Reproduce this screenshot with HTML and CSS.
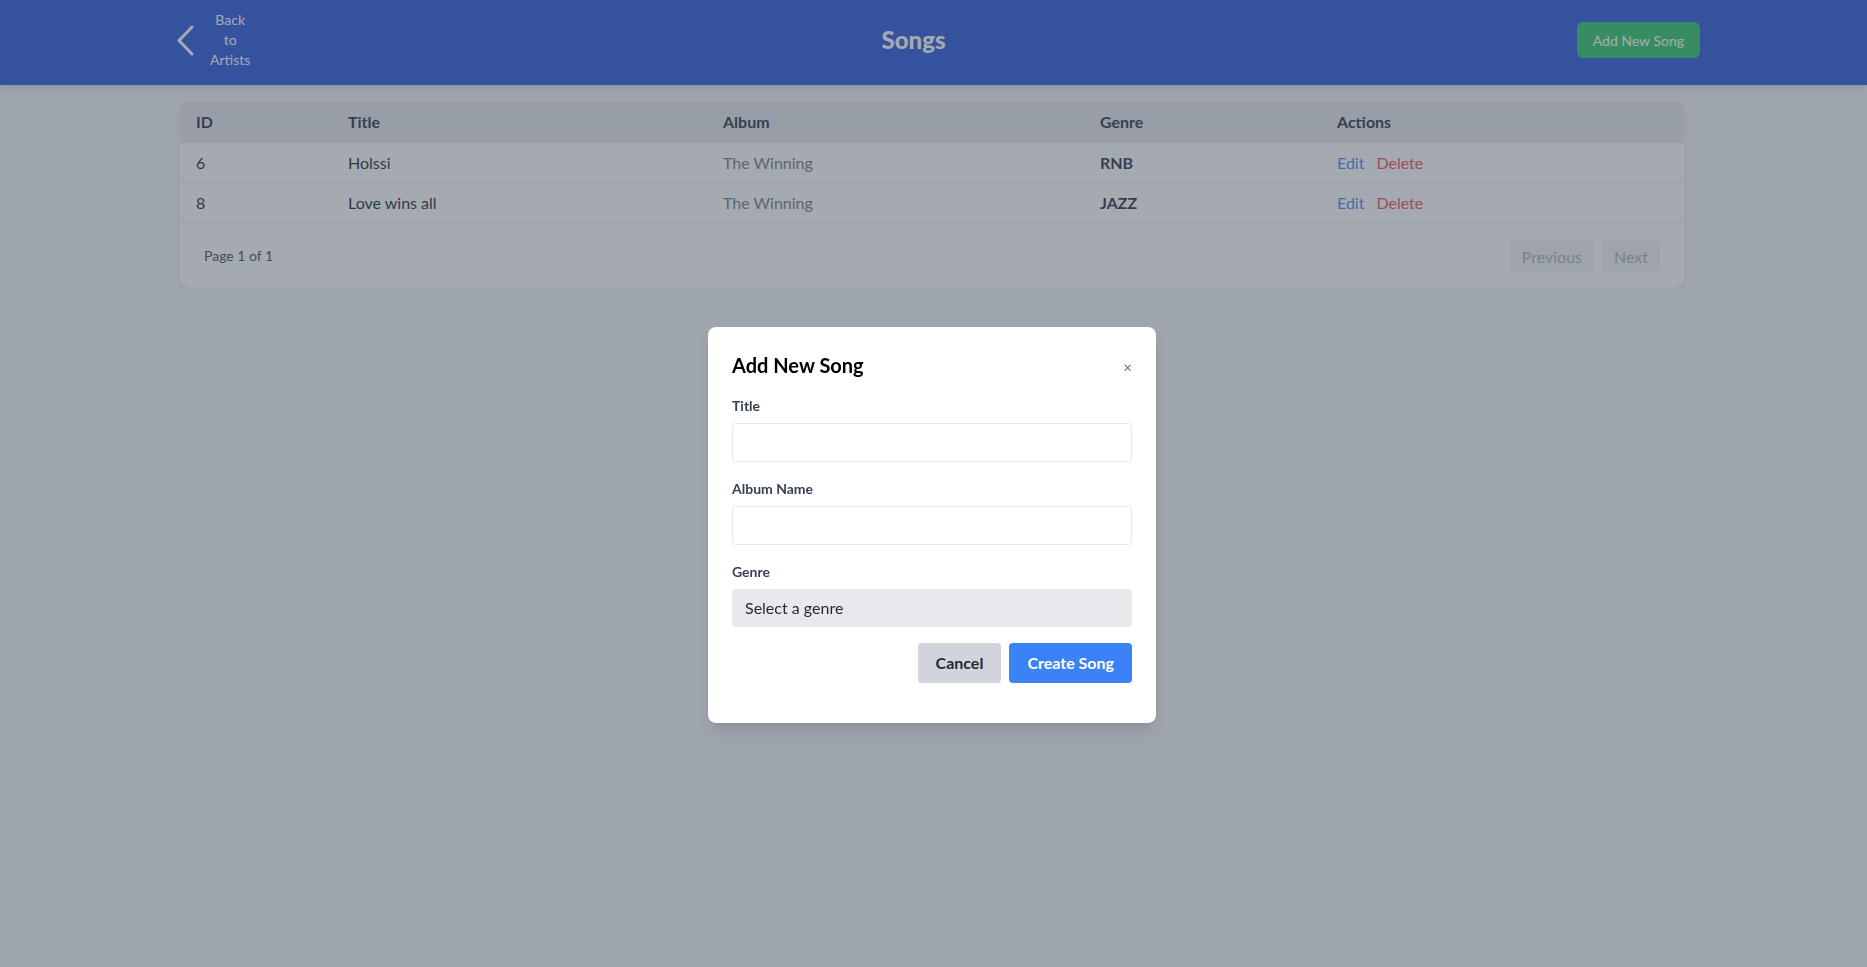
FILE: index.html
```html
<!DOCTYPE html>
<html lang="en">
<head>
<meta charset="utf-8">
<title>Songs</title>
<link rel="stylesheet" href="styles.css">
</head>
<body>
<header class="topbar">
  <a class="back" href="#">
    <svg class="back-icon" viewBox="0 0 20 34" width="20" height="34" aria-hidden="true"><path d="M17 4 L4 17.5 L17 31" fill="none" stroke="#ffffff" stroke-width="3" stroke-linecap="round" stroke-linejoin="round"/></svg>
    <span class="back-text">Back to Artists</span>
  </a>
  <h1 class="page-title">Songs</h1>
  <button class="btn-add" type="button">Add New Song</button>
</header>

<main class="content">
  <section class="card">
    <table class="songs">
      <colgroup>
        <col class="c-id"><col class="c-title"><col class="c-album"><col class="c-genre"><col class="c-actions">
      </colgroup>
      <thead>
        <tr><th>ID</th><th>Title</th><th>Album</th><th>Genre</th><th>Actions</th></tr>
      </thead>
      <tbody>
        <tr><td>6</td><td>Holssi</td><td class="album">The Winning</td><td class="genre">RNB</td><td><a class="edit" href="#">Edit</a><a class="delete" href="#">Delete</a></td></tr>
        <tr><td>8</td><td>Love wins all</td><td class="album">The Winning</td><td class="genre">JAZZ</td><td><a class="edit" href="#">Edit</a><a class="delete" href="#">Delete</a></td></tr>
      </tbody>
    </table>
    <div class="pager">
      <span class="page-info">Page 1 of 1</span>
      <div class="pager-btns">
        <button class="pg-btn" type="button" disabled>Previous</button>
        <button class="pg-btn" type="button" disabled>Next</button>
      </div>
    </div>
  </section>
</main>

<div class="overlay">
  <div class="modal">
    <div class="modal-head">
      <h2 class="modal-title">Add New Song</h2>
      <button class="close" type="button">×</button>
    </div>
    <form class="form">
      <div class="field">
        <label class="label" for="t">Title</label>
        <input class="input" id="t" type="text">
      </div>
      <div class="field">
        <label class="label" for="a">Album Name</label>
        <input class="input" id="a" type="text">
      </div>
      <div class="field field-last">
        <label class="label" for="g">Genre</label>
        <select class="select" id="g"><option>Select a genre</option></select>
      </div>
      <div class="actions">
        <button class="btn-cancel" type="button">Cancel</button>
        <button class="btn-create" type="button">Create Song</button>
      </div>
    </form>
  </div>
</div>
</body>
</html>
```

FILE: styles.css
```css
* { box-sizing: border-box; }

body {
  margin: 0;
  background: #f3f4f6;
  font-family: "Lato", "Noto Sans", sans-serif;
  color: #111827;
}

/* Top bar */
.topbar {
  height: 85px;
  padding: 10px 167px 15px 175px;
  display: flex;
  align-items: center;
  justify-content: space-between;
  background: #1d4ed8;
  box-shadow: 0 4px 6px -1px rgba(0,0,0,0.1), 0 2px 4px -2px rgba(0,0,0,0.1);
}
.back {
  display: flex;
  align-items: center;
  color: #ffffff;
  text-decoration: none;
}
.back-icon { display: block; }
.back-text {
  width: min-content;
  margin-left: 15px;
  font-size: 14px;
  line-height: 20px;
  text-align: center;
}
.page-title {
  margin: 0;
  font-size: 24px;
  line-height: 32px;
  font-weight: 900;
  color: #ffffff;
}
.btn-add {
  height: 36px;
  padding: 0 16px;
  border: 0;
  border-radius: 6px;
  background: #22c55e;
  color: #ffffff;
  font-family: inherit;
  font-size: 14px;
}

/* Content */
.content {
  padding: 17px 183px 0 180px;
}
.card {
  background: #ffffff;
  border-radius: 8px;
  overflow: hidden;
  box-shadow: 0 4px 6px -1px rgba(0,0,0,0.1), 0 2px 4px -2px rgba(0,0,0,0.1);
}
.songs {
  width: 100%;
  border-collapse: collapse;
  table-layout: fixed;
}
.c-id { width: 152px; }
.c-title { width: 375px; }
.c-album { width: 377px; }
.c-genre { width: 237px; }
.c-actions { width: 363px; }
.songs th {
  text-align: left;
  padding: 8px 16px;
  font-size: 16px;
  line-height: 24px;
  font-weight: 700;
  color: #1f2937;
  background: #e5e7eb;
}
.songs td {
  padding: 8px 16px 7px;
  font-size: 16px;
  line-height: 24px;
  color: #111827;
  border-top: 1px solid #e5e7eb;
}
.songs td.album { color: #6b7280; }
.songs td.genre { font-weight: 700; color: #1f2937; }
.edit { color: #3b82f6; text-decoration: none; margin-right: 12px; }
.delete { color: #ef4444; text-decoration: none; }

.pager {
  display: flex;
  align-items: center;
  justify-content: space-between;
  padding: 17px 24px 15px;
  border-top: 1px solid #e5e7eb;
}
.page-info {
  font-size: 14px;
  line-height: 20px;
  color: #374151;
}
.pager-btns { display: flex; gap: 8px; }
.pg-btn {
  height: 32px;
  padding: 0 12px;
  border: 0;
  border-radius: 4px;
  background: #e5e7eb;
  color: #4b5563;
  font-family: inherit;
  font-size: 16px;
  opacity: 0.5;
}

/* Modal */
.overlay {
  position: fixed;
  inset: 0;
  padding: 82px 3px 0 0;
  display: flex;
  align-items: center;
  justify-content: center;
  background: rgba(75, 85, 99, 0.5);
}
.modal {
  width: 448px;
  padding: 24px 24px 40px;
  background: #ffffff;
  border-radius: 8px;
  box-shadow: 0 10px 15px -3px rgba(0,0,0,0.1), 0 4px 6px -4px rgba(0,0,0,0.1);
}
.modal-head {
  display: flex;
  align-items: center;
  justify-content: space-between;
  height: 28px;
  margin-bottom: 17px;
}
.modal-title {
  margin: 0;
  font-size: 20px;
  line-height: 28px;
  font-weight: 700;
  color: #000000;
}
.close {
  padding: 0;
  border: 0;
  background: none;
  color: #6b7280;
  font-family: inherit;
  font-size: 15px;
  line-height: 20px;
  margin-top: 4px;
}
.form { margin: 0; }
.field { margin-bottom: 17px; }
.field-last { margin-bottom: 16px; }
.label {
  display: block;
  margin-bottom: 7px;
  font-size: 14px;
  line-height: 20px;
  font-weight: 700;
  color: #374151;
}
.input {
  display: block;
  width: 100%;
  height: 39px;
  padding: 0 12px;
  border: 1px solid #e5e7eb;
  border-radius: 4px;
  font-family: inherit;
  font-size: 16px;
  background: #ffffff;
}
.select {
  display: block;
  width: 100%;
  height: 38px;
  padding: 0 13px;
  border: 0;
  border-radius: 4px;
  background: #e9e9ed;
  color: #1f2937;
  font-family: inherit;
  font-size: 16px;
  -webkit-appearance: none;
  appearance: none;
}
.actions {
  display: flex;
  justify-content: flex-end;
  gap: 8px;
}
.btn-cancel, .btn-create {
  height: 40px;
  padding: 0 18px;
  border: 0;
  border-radius: 4px;
  font-family: inherit;
  font-size: 16px;
  font-weight: 700;
}
.btn-cancel { background: #d1d5db; color: #1f2937; }
.btn-create { background: #3b82f6; color: #ffffff; }
```
